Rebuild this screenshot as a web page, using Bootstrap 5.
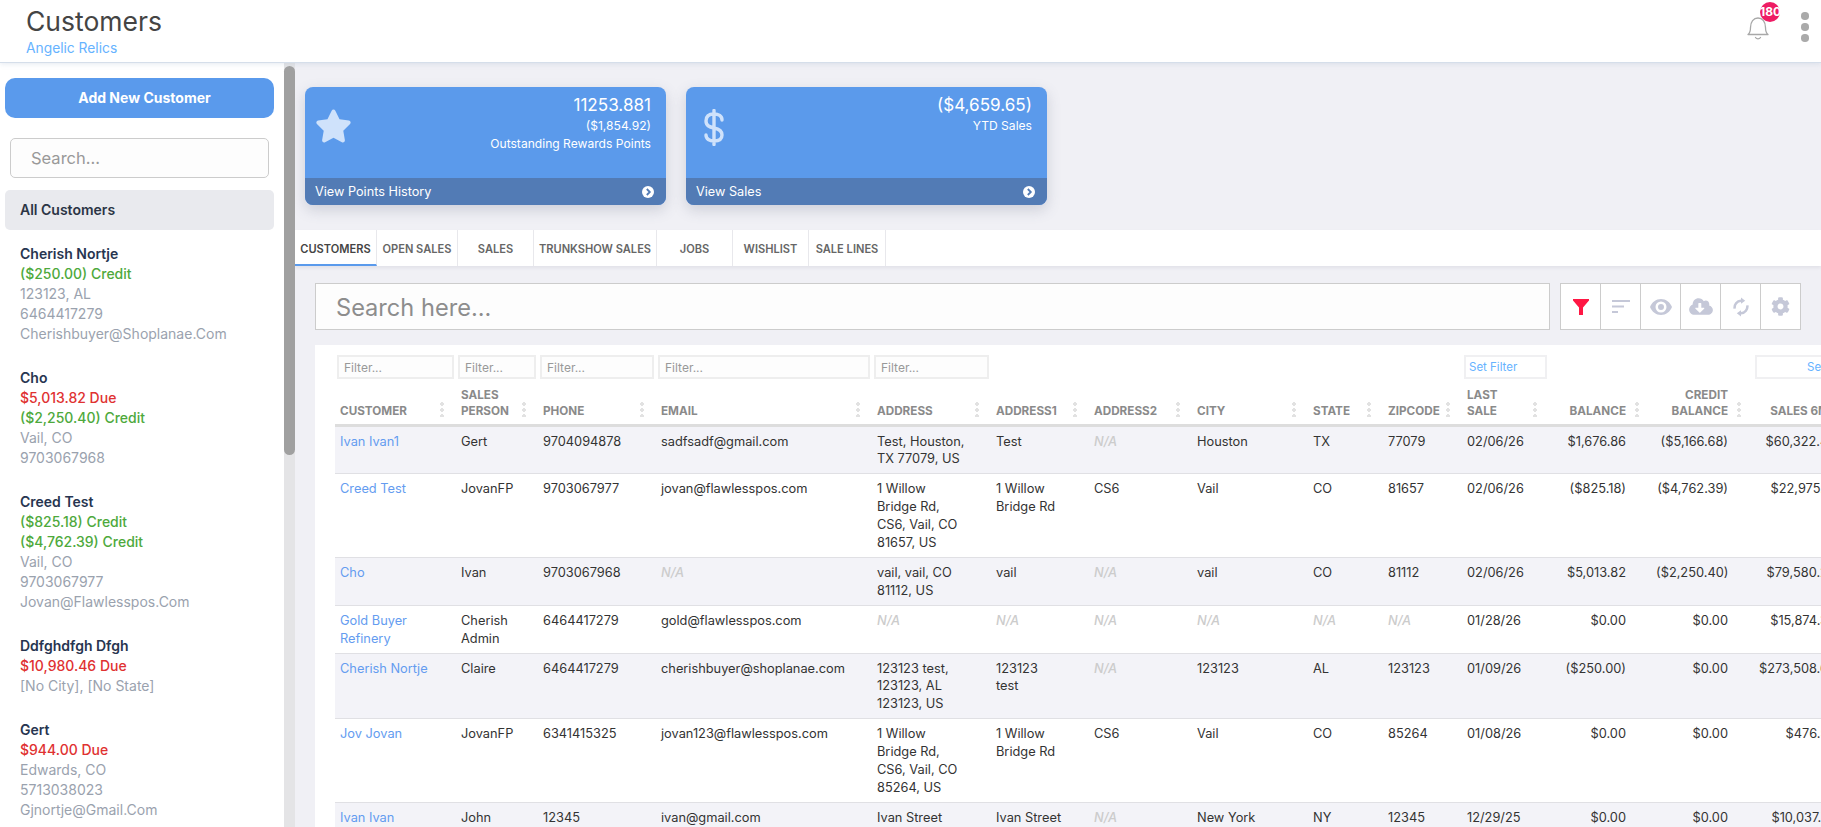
<!DOCTYPE html>
<html lang="en">
<head>
<meta charset="utf-8">
<title>Customers</title>
<link href="https://cdn.jsdelivr.net/npm/bootstrap@5.3.0/dist/css/bootstrap.min.css" rel="stylesheet">
<style>
html,body{height:100%;}
body{font-family:Inter,"Liberation Sans",sans-serif;overflow:hidden;background:#f0f0f5;color:#333;}
.app-shell{height:827px;}
.top-head{height:63px;flex:none;background:#fff;border-bottom:1px solid #d5deea;box-shadow:0 1px 5px rgba(150,170,200,.25);position:relative;z-index:3;padding-left:26px;}
.page-title{font-size:26.5px;font-weight:400;line-height:36px;color:#444;margin:3px 0 0;}
.page-sub{font-size:13.8px;line-height:18px;color:#66b3ff;}
.bell-wrap{position:absolute;left:1745px;top:14px;width:26px;height:26px;}
.bell-badge{position:absolute;left:15px;top:-12px;width:20px;height:20px;border-radius:50%;background:#ee1c64;color:#fff;font-size:12px;font-weight:700;line-height:20px;text-align:center;white-space:nowrap;}
.more-dots{position:absolute;left:1801px;top:12px;width:8px;display:flex;flex-direction:column;gap:3.5px;}
.more-dots i{display:block;width:7.5px;height:7.5px;border-radius:50%;background:#aaa;}
.side-col{width:284px;flex:none;background:#fff;overflow:hidden;padding:15px 10px 0 5px;}
.add-btn{width:269px;height:40px;background:#5a9aec;border:0;border-radius:10px;color:#fff;font-size:14px;font-weight:700;padding:0 2px 2px 12px;}
.add-btn:hover{background:#5a9aec;color:#fff;}
.side-search{display:block;width:259px;height:40px;margin:20px 5px 12px;background:#fdfdfd;border:1px solid #ccc;border-radius:5px;font-size:16.5px;padding:0 0 0 20px;color:#333;}
.side-search::placeholder{color:#999;}
.all-row{width:269px;height:40px;background:#e9eaee;border-radius:5px;font-size:14px;font-weight:600;color:#2b3545;line-height:40px;padding-left:15px;}
.cust-list{padding:14px 0 0 15px;font-size:14px;line-height:20px;white-space:nowrap;}
.cust-item{margin-bottom:24px;color:#9aa2ae;}
.cust-name{font-weight:600;color:#273550;}
.amt-green{color:#4ea93c;font-weight:500;}
.amt-red{color:#e03131;font-weight:500;}
.side-track{width:11px;flex:none;background:#e4e4e6;padding-top:3px;}
.side-thumb{height:389px;background:#a0a0a0;border-radius:6px;}
.main-col{flex:1 1 0;min-width:0;overflow:hidden;background:#f0f0f5;}
.stat-row{padding:24px 0 25px 10px;gap:20px;}
.stat-box{width:361px;height:118px;border-radius:8px;background:#5b9aeb;color:#fff;overflow:hidden;box-shadow:0 5px 14px rgba(80,90,120,.22);}
.stat-body{height:91px;padding:6px 15px 0 10px;}
.stat-big{font-size:17.1px;line-height:24px;}
.stat-small{font-size:12.1px;line-height:18px;}
.stat-foot{height:27px;background:#527bb5;font-size:12.7px;padding:0 12px 0 10px;}
.stat-ico{fill:#cfe2fb;}
.tab-band{height:36px;background:#fff;box-shadow:0 2px 3px rgba(150,150,170,.15);}
.tab-cell{height:36px;border-right:1px solid #e8e8ec;font-size:11.1px;font-weight:600;color:#666;line-height:38px;text-align:center;white-space:nowrap;flex:none;}
.tab-on{border-bottom:2px solid #5a9aec;color:#444;}
.tw1{width:82px}.tw2{width:81px}.tw3{width:76px}.tw4{width:123px}.tw5{width:76px}.tw6{width:76px}.tw7{width:77px}
.tool-row{padding:17px 0 15px 20px;gap:10px;}
.big-search{width:1235px;height:47px;background:#fdfdfd;border:1px solid #ccc;font-size:23.6px;padding:1px 0 0 20px;border-radius:0;}
.big-search::placeholder{color:#8d8d8d;}
.tool-group{height:47px;background:#fff;border:1px solid #ccc;}
.tool-btn{width:40px;height:45px;border-right:1px solid #ccc;}
.tool-btn:last-child{border-right:0;width:39px;}
.tool-ico{fill:#c5c8d8;}
.data-panel{background:#fff;margin-left:20px;padding:10px 0 0 20px;height:500px;overflow:hidden;}
.cust-table{table-layout:fixed;width:1526px;margin:0;font-size:12.8px;line-height:1.4;--bs-table-border-color:#e0e0e4;--bs-table-striped-bg:#f3f3f8;--bs-table-striped-color:#333;--bs-table-color:#333;--bs-table-bg:#fff;}
.cw1{width:121px}.cw2{width:82px}.cw3{width:118px}.cw4{width:216px}.cw5{width:119px}.cw6{width:98px}.cw7{width:103px}.cw8{width:116px}.cw9{width:75px}.cw10{width:79px}.cw11{width:87px}.cw12{width:102px}.cw13{width:102px}.cw14{width:108px}
.cust-table .filter-row th{padding:0 2px;border:0;height:24px;}
.col-filter{display:block;width:100%;height:24px;border:2px solid #eee;background:#fdfdfd;font-size:12px;font-weight:400;padding:0 5px;color:#333;}
.col-filter::placeholder{color:#999;}
.set-filter{display:block;width:100%;height:24px;border:2px solid #f0f0f2;background:#fff;font-size:11.5px;line-height:20px;font-weight:400;color:#66b3ff;padding:0 3px;text-align:left;white-space:nowrap;}
.set-far{padding-left:50px;overflow:hidden;}
.cust-table .label-row th{height:46px;vertical-align:bottom;border-bottom:3px solid #ddd;padding:0 25px 5px 5px;font-size:11.7px;line-height:16px;font-weight:700;color:#8a8a8a;text-transform:uppercase;position:relative;}
.cust-table .label-row th.num-col{text-align:right;}
.cust-table .label-row th.far-head{padding-right:32px;white-space:nowrap;}
.drag-dots{position:absolute;right:12px;bottom:7px;width:4px;height:16px;background:radial-gradient(circle,#e2e2e2 1.9px,transparent 2.1px) 0 0/4px 6px repeat-y;}
.cust-table td{padding:6px 25px 5px 5px;border-bottom-width:1px;vertical-align:top;}
.cust-table td:nth-child(6){padding-right:30px;}
.cust-table td.num-col{text-align:right;white-space:nowrap;}
.cust-link{color:#649cf0;text-decoration:none;}
.na-val{color:#ccc;font-style:italic;font-weight:500;}
</style>
</head>
<body>
<div class="app-shell d-flex flex-column">
  <header class="top-head">
    <h1 class="page-title">Customers</h1>
    <div class="page-sub">Angelic Relics</div>
    <div class="bell-wrap">
      <svg width="26" height="26" viewBox="0 0 26 26" fill="none" stroke="#a8a8a8" stroke-width="1.3" stroke-linecap="round" stroke-linejoin="round"><path d="M3 19.500c2-1.500 2.500-3.500 2.500-7C5.500 7 8.500 3 13 3s7.500 4 7.500 9.500c0 3.500.5 5.500 2.500 7z"/><path d="M10.500 22.500c1.200 1.700 3.800 1.700 5 0"/></svg>
      <span class="bell-badge">180</span>
    </div>
    <div class="more-dots"><i></i><i></i><i></i></div>
  </header>
  <div class="d-flex flex-grow-1" style="min-height:0">
    <aside class="side-col">
      <button class="btn add-btn" type="button">Add New Customer</button>
      <input class="side-search" type="text" placeholder="Search...">
      <div class="all-row">All Customers</div>
      <div class="cust-list">
        <div class="cust-item"><div class="cust-name">Cherish Nortje</div><div class="amt-green">($250.00) Credit</div><div>123123, AL</div><div>6464417279</div><div>Cherishbuyer@Shoplanae.Com</div></div>
        <div class="cust-item"><div class="cust-name">Cho</div><div class="amt-red">$5,013.82 Due</div><div class="amt-green">($2,250.40) Credit</div><div>Vail, CO</div><div>9703067968</div></div>
        <div class="cust-item"><div class="cust-name">Creed Test</div><div class="amt-green">($825.18) Credit</div><div class="amt-green">($4,762.39) Credit</div><div>Vail, CO</div><div>9703067977</div><div>Jovan@Flawlesspos.Com</div></div>
        <div class="cust-item"><div class="cust-name">Ddfghdfgh Dfgh</div><div class="amt-red">$10,980.46 Due</div><div>[No City], [No State]</div></div>
        <div class="cust-item"><div class="cust-name">Gert</div><div class="amt-red">$944.00 Due</div><div>Edwards, CO</div><div>5713038023</div><div>Gjnortje@Gmail.Com</div></div>
      </div>
    </aside>
    <div class="side-track"><div class="side-thumb"></div></div>
    <main class="main-col">
      <div class="d-flex stat-row">
        <div class="stat-box d-flex flex-column">
          <div class="stat-body d-flex justify-content-between">
            <svg class="stat-ico mt-3" width="37" height="34" viewBox="0 0 576 512"><path d="M259.3 17.8L194 150.200 47.900 171.500c-26.200 3.800-36.700 36.100-17.700 54.600l105.700 103-25 145.500c-4.500 26.300 23.200 46 46.400 33.700L288 439.600l130.700 68.700c23.200 12.200 50.900-7.400 46.400-33.700l-25-145.500 105.700-103c19-18.500 8.500-50.800-17.700-54.600L382 150.200 316.700 17.800c-11.700-23.600-45.600-23.900-57.400 0z"/></svg>
            <div class="text-end"><div class="stat-big">11253.881</div><div class="stat-small">($1,854.92)</div><div class="stat-small">Outstanding Rewards Points</div></div>
          </div>
          <div class="stat-foot d-flex justify-content-between align-items-center"><span>View Points History</span>
            <svg width="12" height="12" viewBox="0 0 12 12"><circle cx="6" cy="6" r="6" fill="#fff"/><path d="M4.800 3l3 3-3 3" fill="none" stroke="#527bb5" stroke-width="1.800"/></svg></div>
        </div>
        <div class="stat-box d-flex flex-column">
          <div class="stat-body d-flex justify-content-between">
            <svg class="mt-3 ms-2" width="20" height="37" viewBox="0 0 20 37" fill="none" stroke="#cfe2fb" stroke-width="3.400" stroke-linecap="round"><path d="M10 1.500v34M18 11c0-4-3.500-6-8-6-5 0-8 2.500-8 7 0 5 4 6 8 7 5 1 8 2.500 8 7 0 4-3 6-8 6-4.500 0-8-2-8-6"/></svg>
            <div class="text-end"><div class="stat-big">($4,659.65)</div><div class="stat-small">YTD Sales</div></div>
          </div>
          <div class="stat-foot d-flex justify-content-between align-items-center"><span>View Sales</span>
            <svg width="12" height="12" viewBox="0 0 12 12"><circle cx="6" cy="6" r="6" fill="#fff"/><path d="M4.800 3l3 3-3 3" fill="none" stroke="#527bb5" stroke-width="1.800"/></svg></div>
        </div>
      </div>
      <div class="tab-band d-flex">
        <div class="tab-cell tw1 tab-on">CUSTOMERS</div>
        <div class="tab-cell tw2">OPEN SALES</div>
        <div class="tab-cell tw3">SALES</div>
        <div class="tab-cell tw4">TRUNKSHOW SALES</div>
        <div class="tab-cell tw5">JOBS</div>
        <div class="tab-cell tw6">WISHLIST</div>
        <div class="tab-cell tw7">SALE LINES</div>
      </div>
      <div class="d-flex tool-row">
        <input class="big-search form-control" type="text" placeholder="Search here...">
        <div class="tool-group d-flex">
          <div class="tool-btn d-flex align-items-center justify-content-center"><svg width="16" height="16" viewBox="0 0 16 16"><path d="M0 0h16v1.500L10 8.500V16H6V8.500L0 1.500z" fill="#ff1744"/></svg></div>
          <div class="tool-btn d-flex align-items-center justify-content-center"><svg width="18" height="14" viewBox="0 0 18 14" fill="#c5c8d8"><rect width="18" height="2"/><rect y="5.500" width="12" height="2"/><rect y="11" width="6" height="2"/></svg></div>
          <div class="tool-btn d-flex align-items-center justify-content-center"><svg class="tool-ico" width="22" height="16" viewBox="0 0 22 16"><path fill-rule="evenodd" d="M11 0c5 0 9 3.200 11 8-2 4.800-6 8-11 8S2 12.800 0 8c2-4.800 6-8 11-8zm0 2.500a5.500 5.500 0 1 0 0 11 5.500 5.500 0 0 0 0-11zm0 2.500a3 3 0 1 1 0 6 3 3 0 0 1 0-6z"/></svg></div>
          <div class="tool-btn d-flex align-items-center justify-content-center"><svg class="tool-ico" width="24" height="19" viewBox="0 0 640 512"><path d="M537.600 226.600c4.100-10.700 6.400-22.400 6.400-34.600 0-53-43-96-96-96-19.700 0-38.100 6-53.300 16.200C367 64.200 315.300 32 256 32c-88.400 0-160 71.600-160 160 0 2.700.1 5.400.2 8.100C40.200 219.800 0 273.200 0 336c0 79.500 64.500 144 144 144h368c70.700 0 128-57.300 128-128 0-61.900-44-113.600-102.400-125.400zm-132.900 88.700L299.300 420.700c-6.200 6.200-16.400 6.200-22.600 0L171.300 315.300c-10.100-10.100-2.900-27.300 11.300-27.300H248V176c0-8.800 7.200-16 16-16h48c8.800 0 16 7.200 16 16v112h65.400c14.200 0 21.400 17.200 11.300 27.300z"/></svg></div>
          <div class="tool-btn d-flex align-items-center justify-content-center"><svg width="16" height="20" viewBox="0 0 15 19"><path d="M1.500 11A6.500 6.500 0 0 1 7.500 3.500M13.500 8A6.500 6.500 0 0 1 7.500 15.500" fill="none" stroke="#c5c8d8" stroke-width="2.400"/><path d="M7.500 .5L11.500 3.500 7.500 6.500zM7.500 12.500L3.500 15.500 7.500 18.500z" fill="#c5c8d8"/></svg></div>
          <div class="tool-btn d-flex align-items-center justify-content-center"><svg class="tool-ico" width="19" height="19" viewBox="0 0 512 512"><path d="M487.400 315.700l-42.600-24.600c4.300-23.200 4.300-47 0-70.200l42.600-24.600c4.900-2.800 7.100-8.600 5.500-14-11.100-35.600-30-67.800-54.700-94.600-3.800-4.100-10-5.100-14.800-2.300L380.800 110c-17.900-15.400-38.500-27.300-60.800-35.100V25.800c0-5.600-3.900-10.500-9.400-11.700-36.700-8.200-74.300-7.800-109.200 0-5.500 1.200-9.400 6.100-9.400 11.700V75c-22.200 7.900-42.800 19.800-60.800 35.100L88.700 85.500c-4.900-2.800-11-1.900-14.800 2.300-24.700 26.700-43.600 58.900-54.700 94.600-1.700 5.400.6 11.200 5.500 14L67.300 221c-4.300 23.200-4.300 47 0 70.200l-42.600 24.600c-4.900 2.800-7.100 8.600-5.500 14 11.100 35.600 30 67.800 54.700 94.600 3.800 4.100 10 5.100 14.800 2.300l42.600-24.600c17.900 15.400 38.500 27.300 60.800 35.100v49.200c0 5.600 3.900 10.500 9.400 11.700 36.700 8.200 74.300 7.800 109.200 0 5.500-1.200 9.400-6.100 9.400-11.700v-49.200c22.200-7.900 42.800-19.800 60.800-35.100l42.600 24.600c4.900 2.800 11 1.900 14.800-2.300 24.700-26.700 43.600-58.900 54.700-94.600 1.500-5.500-.7-11.300-5.600-14.100zM256 336c-44.100 0-80-35.900-80-80s35.900-80 80-80 80 35.900 80 80-35.900 80-80 80z"/></svg></div>
        </div>
      </div>
      <div class="data-panel">
        <table class="table table-striped cust-table">
          <colgroup><col class="cw1"><col class="cw2"><col class="cw3"><col class="cw4"><col class="cw5"><col class="cw6"><col class="cw7"><col class="cw8"><col class="cw9"><col class="cw10"><col class="cw11"><col class="cw12"><col class="cw13"><col class="cw14"></colgroup>
          <thead>
            <tr class="filter-row">
              <th><input class="col-filter" placeholder="Filter..."></th><th><input class="col-filter" placeholder="Filter..."></th><th><input class="col-filter" placeholder="Filter..."></th><th><input class="col-filter" placeholder="Filter..."></th><th><input class="col-filter" placeholder="Filter..."></th>
              <th></th><th></th><th></th><th></th><th></th>
              <th><div class="set-filter">Set Filter</div></th><th></th><th></th><th><div class="set-filter set-far">Set Filter</div></th>
            </tr>
            <tr class="label-row">
              <th>Customer<span class="drag-dots"></span></th><th>Sales Person<span class="drag-dots"></span></th><th>Phone<span class="drag-dots"></span></th><th>Email<span class="drag-dots"></span></th><th>Address<span class="drag-dots"></span></th><th>Address1<span class="drag-dots"></span></th><th>Address2<span class="drag-dots"></span></th><th>City<span class="drag-dots"></span></th><th>State<span class="drag-dots"></span></th><th>Zipcode<span class="drag-dots"></span></th><th>Last Sale<span class="drag-dots"></span></th><th class="num-col">Balance<span class="drag-dots"></span></th><th class="num-col">Credit Balance<span class="drag-dots"></span></th><th class="num-col far-head">Sales 6M<span class="drag-dots"></span></th>
            </tr>
          </thead>
          <tbody>
            <tr><td><a class="cust-link" href="#">Ivan Ivan1</a></td><td>Gert</td><td>9704094878</td><td>sadfsadf@gmail.com</td><td>Test, Houston, TX 77079, US</td><td>Test</td><td><span class="na-val">N/A</span></td><td>Houston</td><td>TX</td><td>77079</td><td>02/06/26</td><td class="num-col">$1,676.86</td><td class="num-col">($5,166.68)</td><td class="num-col">$60,322.45</td></tr>
            <tr><td><a class="cust-link" href="#">Creed Test</a></td><td>JovanFP</td><td>9703067977</td><td>jovan@flawlesspos.com</td><td>1 Willow Bridge Rd, CS6, Vail, CO 81657, US</td><td>1 Willow Bridge Rd</td><td>CS6</td><td>Vail</td><td>CO</td><td>81657</td><td>02/06/26</td><td class="num-col">($825.18)</td><td class="num-col">($4,762.39)</td><td class="num-col">$22,975.10</td></tr>
            <tr><td><a class="cust-link" href="#">Cho</a></td><td>Ivan</td><td>9703067968</td><td><span class="na-val">N/A</span></td><td>vail, vail, CO 81112, US</td><td>vail</td><td><span class="na-val">N/A</span></td><td>vail</td><td>CO</td><td>81112</td><td>02/06/26</td><td class="num-col">$5,013.82</td><td class="num-col">($2,250.40)</td><td class="num-col">$79,580.20</td></tr>
            <tr><td><a class="cust-link" href="#">Gold Buyer Refinery</a></td><td>Cherish Admin</td><td>6464417279</td><td>gold@flawlesspos.com</td><td><span class="na-val">N/A</span></td><td><span class="na-val">N/A</span></td><td><span class="na-val">N/A</span></td><td><span class="na-val">N/A</span></td><td><span class="na-val">N/A</span></td><td><span class="na-val">N/A</span></td><td>01/28/26</td><td class="num-col">$0.00</td><td class="num-col">$0.00</td><td class="num-col">$15,874.30</td></tr>
            <tr><td><a class="cust-link" href="#">Cherish Nortje</a></td><td>Claire</td><td>6464417279</td><td>cherishbuyer@shoplanae.com</td><td>123123 test, 123123, AL 123123, US</td><td>123123 test</td><td><span class="na-val">N/A</span></td><td>123123</td><td>AL</td><td>123123</td><td>01/09/26</td><td class="num-col">($250.00)</td><td class="num-col">$0.00</td><td class="num-col">$273,508.60</td></tr>
            <tr><td><a class="cust-link" href="#">Jov Jovan</a></td><td>JovanFP</td><td>6341415325</td><td>jovan123@flawlesspos.com</td><td>1 Willow Bridge Rd, CS6, Vail, CO 85264, US</td><td>1 Willow Bridge Rd</td><td>CS6</td><td>Vail</td><td>CO</td><td>85264</td><td>01/08/26</td><td class="num-col">$0.00</td><td class="num-col">$0.00</td><td class="num-col">$476.50</td></tr>
            <tr><td><a class="cust-link" href="#">Ivan Ivan</a></td><td>John</td><td>12345</td><td>ivan@gmail.com</td><td>Ivan Street New York, NY 12345, US</td><td>Ivan&nbsp;Street</td><td><span class="na-val">N/A</span></td><td>New York</td><td>NY</td><td>12345</td><td>12/29/25</td><td class="num-col">$0.00</td><td class="num-col">$0.00</td><td class="num-col">$10,037.75</td></tr>
          </tbody>
        </table>
      </div>
    </main>
  </div>
</div>
<script src="https://cdn.jsdelivr.net/npm/bootstrap@5.3.0/dist/js/bootstrap.bundle.min.js"></script>
</body>
</html>
